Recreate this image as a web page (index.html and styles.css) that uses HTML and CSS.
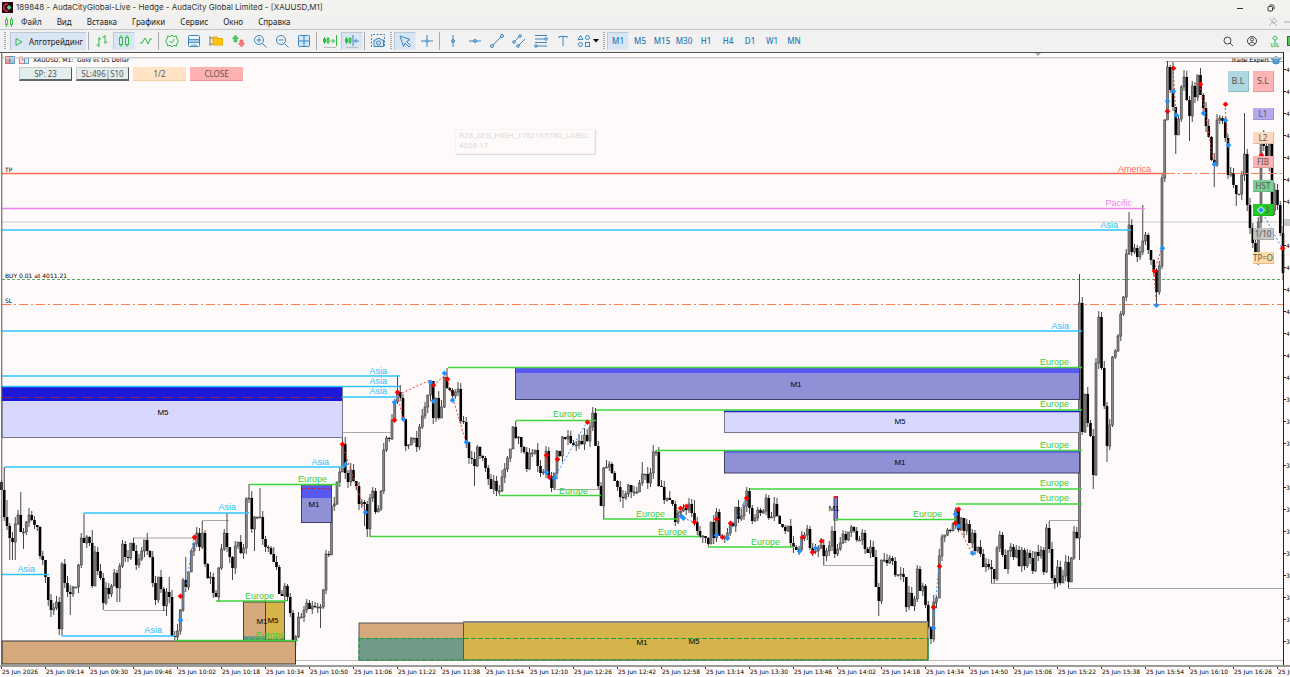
FILE: index.html
```html
<!DOCTYPE html>
<html lang="ru">
<head>
<meta charset="utf-8">
<title>XAUUSD,M1</title>
<link rel="stylesheet" href="styles.css">
</head>
<body>
<header class="titlebar">
  <svg class="app-logo" viewBox="0 0 11 11"><rect width="11" height="11" fill="#2a0712"/><path d="M6 2H4L2 4v3l2 2h2" fill="none" stroke="#e0284c" stroke-width="1.6"/><path d="M5 5.5h4M7 3.5v4" stroke="#4fe08a" stroke-width="2"/></svg>
  <h1 class="title">189848 - AudaCityGlobal-Live - Hedge - AudaCity Global Limited - [XAUUSD,M1]</h1>
  <div class="window-tools">
    <button class="win-btn" aria-label="Свернуть"><svg viewBox="0 0 10 10"><path d="M2 5.500h6" stroke="#333"/></svg></button>
    <button class="win-btn" aria-label="Восстановить"><svg viewBox="0 0 10 10" fill="none" stroke="#333"><rect x="2" y="3.500" width="4.500" height="4.500" rx="1"/><path d="M3.500 2h3q1.500 0 1.500 1.500v3"/></svg></button>
  </div>
</header>
<nav class="menubar">
  <svg class="menu-logo" viewBox="0 0 10 12" fill="none" stroke="#3fc24c"><rect x="1.500" y="3.500" width="2" height="5"/><rect x="6.500" y="3.500" width="2" height="5"/><path d="M2.500 1v2M2.500 9v2M7.500 1v2M7.500 9v2"/></svg>
  <button class="menu">Файл</button><button class="menu">Вид</button><button class="menu">Вставка</button><button class="menu">Графики</button><button class="menu">Сервис</button><button class="menu">Окно</button><button class="menu">Справка</button>
  <div class="menu-end">
    <svg viewBox="0 0 10 10" fill="none" stroke="#bbb"><path d="M1 9l3-3M3 4l3 3 1-2 2-1-3-3-1 2zM1 1l8 8"/></svg>
    <svg viewBox="0 0 6 10"><path d="M0 5h6" stroke="#aaa"/></svg>
  </div>
</nav>
<div class="toolbar">
  <span class="grip"></span>
  <button class="algo"><svg viewBox="0 0 10 10" fill="none" stroke="#2fb945"><path d="M2 1.500l6 3.500-6 3.500z"/></svg>Алготрейдинг</button>
  <span class="sep"></span>
  <button class="tool green" aria-label="Бары"><svg viewBox="0 0 14 14"><path d="M4 3v10M1.500 11H4M4 5h2M10 1v9M7.500 3H10M10 8h2.500"/></svg></button>
  <button class="tool green on" aria-label="Свечи"><svg viewBox="0 0 14 14"><rect x="2.500" y="3.500" width="3" height="7"/><rect x="8.500" y="3.500" width="3" height="7"/><path d="M4 1v2M4 11v2M10 1v2M10 11v2"/></svg></button>
  <button class="tool green" aria-label="Линия"><svg viewBox="0 0 14 14"><path d="M1 9l2 0 3-5 3 6 2-5 2 0"/></svg></button>
  <span class="sep"></span>
  <button class="tool green" aria-label="Индикаторы"><svg viewBox="0 0 14 14"><path d="M7 1l1.700 1.600 2.800-.6.4 2.700L13.500 7l-1.600 2.300-.4 2.700-2.800-.6L7 13l-1.700-1.600-2.800.6-.4-2.700L.5 7l1.600-2.300.4-2.700 2.800.6z"/><path d="M4.500 7l2 2 3-4"/></svg></button>
  <button class="tool" aria-label="Окна"><svg viewBox="0 0 14 14"><rect x="1.500" y="1.500" width="11" height="11" rx="1" fill="#eef5fb"/><rect x="2" y="5.500" width="10" height="3" fill="#a5cbe8" stroke="none"/><path d="M1.500 5.500h11M1.500 8.500h11M4 11h6" stroke-width=".8"/></svg></button>
  <button class="tool" aria-label="Папка"><svg viewBox="0 0 14 14"><path d="M1 2v10M1 4h3M1 10h3" stroke="#777"/><path d="M4 3h4l1 1.500h5V11H4z" fill="#ffc20e" stroke="#e5a800"/></svg></button>
  <button class="tool" aria-label="Обмен"><svg viewBox="0 0 14 14"><path d="M4.500 1l3 3.500H6V8H3V4.500H1.500z" fill="#58c968" stroke="#2fb945" stroke-width=".6"/><path d="M10.500 13l3-3.500H12V6H9v3.500H7.500z" fill="#f08080" stroke="#e05050" stroke-width=".6"/></svg></button>
  <button class="tool" aria-label="Увеличить"><svg viewBox="0 0 14 14"><circle cx="6" cy="6" r="4.500"/><path d="M9.500 9.500l4 4M3.500 6h5M6 3.500v5"/></svg></button>
  <button class="tool" aria-label="Уменьшить"><svg viewBox="0 0 14 14"><circle cx="6" cy="6" r="4.500"/><path d="M9.500 9.500l4 4M3.500 6h5"/></svg></button>
  <button class="tool" aria-label="Сетка"><svg viewBox="0 0 14 14"><rect x="1.500" y="1.500" width="11" height="11" rx="1" fill="#d4e8f8"/><path d="M7 1.500v11M1.500 7h11"/></svg></button>
  <span class="sep"></span>
  <button class="tool green" aria-label="Автопрокрутка"><svg viewBox="0 0 14 14"><path d="M1.500 3v7M5 3v7M.5 5h2v3h-2zM4 4.500h2v4H4zM7.500 7h4M9.500 5l2 2-2 2M13.500 1v11"/><path d="M1 13.500h12" stroke="#bbb"/></svg></button>
  <button class="tool on" aria-label="Сдвиг"><svg viewBox="0 0 14 14"><path stroke="#2fb945" d="M1.500 3v7M5 3v7M.5 5h2v3h-2zM4 4.500h2v4H4z"/><path d="M8 1v11M9.500 7H14M11.500 5l-2 2 2 2"/><path d="M1 13.500h12" stroke="#bbb"/></svg></button>
  <span class="sep"></span>
  <button class="tool" aria-label="Снимок"><svg viewBox="0 0 14 14"><path d="M.5 13V.5h13V13" stroke-dasharray="2 1.500"/><path d="M3 6h2l1-1.500h3L10 6h2.500v6.500H3z" fill="#d4e8f8"/><circle cx="7.500" cy="9" r="2"/></svg></button>
  <span class="grip"></span>
  <button class="tool on" aria-label="Курсор"><svg viewBox="0 0 14 14"><path d="M2 2l10 3.500-3.500 2 4 4-1.500 1.500-4-4-1.500 3.500z"/></svg></button>
  <button class="tool" aria-label="Перекрестие"><svg viewBox="0 0 14 14"><path d="M7 1v12M1 7h12"/><rect x="6" y="6" width="2" height="2" fill="#8fc0e6" stroke-width=".6"/></svg></button>
  <span class="sep"></span>
  <button class="tool" aria-label="Вертикаль"><svg viewBox="0 0 14 14"><path d="M7 1v12"/><circle cx="7" cy="7" r="1.500" fill="#8fc0e6"/></svg></button>
  <button class="tool" aria-label="Горизонталь"><svg viewBox="0 0 14 14"><path d="M1 7h12"/><circle cx="7" cy="7" r="1.500" fill="#8fc0e6"/></svg></button>
  <button class="tool" aria-label="Тренд"><svg viewBox="0 0 14 14"><path d="M2 12L12 2"/><circle cx="2" cy="12" r="1.500" fill="#d4e8f8"/><circle cx="12" cy="2" r="1.500" fill="#d4e8f8"/></svg></button>
  <button class="tool" aria-label="Канал"><svg viewBox="0 0 14 14"><path d="M2 8l6-6M6 12l7-7"/><circle cx="2" cy="8" r="1.300" fill="#d4e8f8"/><circle cx="8" cy="2" r="1.300" fill="#d4e8f8"/><circle cx="6" cy="12" r="1.300" fill="#d4e8f8"/></svg></button>
  <button class="tool" aria-label="Фибоначчи"><svg viewBox="0 0 14 14"><path d="M1 1.500h12M1 5h12M1 8.500h12M1 12h12"/><circle cx="12" cy="5" r="1.300" fill="#d4e8f8"/><circle cx="2" cy="12" r="1.300" fill="#d4e8f8"/></svg></button>
  <button class="tool" aria-label="Текст"><svg viewBox="0 0 14 14"><path d="M3 4V2.500h8V4M7 2.500V12"/></svg></button>
  <button class="tool wide" aria-label="Фигуры"><svg viewBox="0 0 14 14"><path d="M1 5.500L3.500 1.500 6 5.500z"/><circle cx="10.500" cy="3.500" r="2"/><circle cx="3.500" cy="10.500" r="2"/><rect x="8.500" y="8.500" width="4" height="4"/></svg><svg class="caret" viewBox="0 0 6 4"><path d="M0 0h6L3 3.500z"/></svg></button>
  <span class="grip"></span>
  <button class="tool tf on">M1</button><button class="tool tf">M5</button><button class="tool tf">M15</button><button class="tool tf">M30</button><button class="tool tf">H1</button><button class="tool tf">H4</button><button class="tool tf">D1</button><button class="tool tf">W1</button><button class="tool tf">MN</button>
  <div class="toolbar-end">
    <button class="tool dark" aria-label="Поиск"><svg viewBox="0 0 14 14"><circle cx="6.500" cy="6.500" r="3.500"/><path d="M9 9l3 3"/></svg></button>
    <button class="tool dark" aria-label="Профиль"><svg viewBox="0 0 14 14"><circle cx="7" cy="7" r="4.500"/><circle cx="7" cy="5.500" r="1.500"/><path d="M4 10q3-3.500 6 0"/></svg></button>
    <button class="tool lvl"><svg viewBox="0 0 8 8" fill="none" stroke="#2fb945"><path d="M4 .8l2.500 2.400L4 5.200 1.500 3.200zM4 5v3"/></svg>LVL</button>
    <span class="battery"></span>
  </div>
</div>
<main class="chart">
  <svg class="plot" id="plot" viewBox="0 52 1290 613" preserveAspectRatio="xMinYMin slice" role="img" aria-label="XAUUSD M1"></svg>
  <div class="trade-row">
    <button class="trade raised">SP: 23</button><button class="trade raised">SL:496|S10</button><button class="trade peach">1/2</button><button class="trade rose">CLOSE</button>
  </div>
  <div class="tip">RZ8_SES_HIGH_1782165780_LABEL<br>4028.17</div>
  <div class="side">
    <div class="side-top"><button class="big bl">B.L</button><button class="big sl">S.L</button></div>
    <button class="small c1">L1</button><button class="small c2">L2</button><button class="small c3">FIB</button><button class="small c4">HST</button>
    <button class="small c5"><svg viewBox="0 0 8 8"><path d="M4 0l4 4-4 4-4-4z" fill="#fff"/><path d="M4 1l3 3-3 3-3-3z" fill="#1e90ff"/></svg>3</button>
    <button class="small c6">1/10</button><button class="small c7">TP=O</button>
  </div>
  <div class="times" id="times"></div>
</main>
<script src="chart.js"></script>
</body>
</html>
```

FILE: styles.css
```css
* { box-sizing: border-box; }
body {
  margin: 0;
  min-height: 100vh;
  display: flex;
  flex-direction: column;
  background: #f0f0f0;
  color: #222;
  font: 8px/12px "Noto Sans", "Open Sans", sans-serif;
  overflow: hidden;
}
button { font: inherit; color: inherit; border: 0; padding: 0; background: none; }
.titlebar { height: 15px; display: flex; align-items: center; background: #f3f2ee; }
.app-logo { width: 11px; height: 11px; margin: 0 3px 0 2px; }
.title { margin: 0; font: 8px/15px Inter, Roboto, sans-serif; color: #333; white-space: nowrap; }
.window-tools { margin-left: auto; display: flex; gap: 21px; padding-right: 14px; }
.win-btn { width: 10px; height: 10px; display: flex; }
.menubar { height: 15px; display: flex; align-items: center; border-bottom: 1px solid #c4c6c4; }
.menu-logo { width: 10px; height: 12px; margin: 0 7px 0 4px; }
.menu { margin-right: 15px; white-space: nowrap; }
.menu-end { margin-left: auto; display: flex; gap: 6px; }
.menu-end svg { height: 10px; }
.toolbar { height: 22px; display: flex; align-items: center; padding-left: 3px; overflow: hidden; background: #f1f1f1; }
.grip { flex: 0 0 5px; height: 18px; background: repeating-linear-gradient(#aaa 0 1px, transparent 1px 2px) 1px 0 / 2px 100% no-repeat; }
.sep { flex: 0 0 4px; height: 18px; background: linear-gradient(#aaa, #aaa) 1px 0 / 1px 100% no-repeat; }
.algo { flex: 0 0 76px; margin: 0 1px 0 2px; height: 18px; display: flex; align-items: center; gap: 5px; padding-left: 3px; background: #d8e5f2; border-top: 1px solid #bcc8d4; border-left: 1px solid #bcc8d4; white-space: nowrap; }
.algo svg { width: 10px; height: 10px; }
.tool { flex: 0 0 22px; height: 18px; display: flex; align-items: center; justify-content: center; border: 1px solid transparent; }
.tool svg { width: 14px; height: 14px; flex: none; fill: none; stroke: #3a85c0; }
.tool.green svg { stroke: #2fb945; }
.tool.dark svg { stroke: #444; }
.tool.on { background: #d8e5f2; border-color: #bcc8d4 #e4ecf4 #e4ecf4 #bcc8d4; }
.tool.wide { flex-basis: 28px; gap: 2px; }
.tool svg.caret { width: 6px; height: 4px; fill: #000; stroke: none; }
.tf { color: #2a78b4; font-weight: 500; }
.toolbar-end { margin-left: auto; display: flex; align-items: center; gap: 2px; }
.tool.lvl { width: 20px; flex-basis: 20px; flex-direction: column; color: #2fb945; font: 700 5px/5px "Noto Sans", sans-serif; }
.tool.lvl svg { width: 8px; height: 8px; stroke: #2fb945; }
.battery { width: 3px; height: 10px; background: #4cc94c; border: 1px solid #555; border-right: 0; }

.chart { position: relative; flex: 1; display: flex; flex-direction: column; background: #fffafa; }
.plot { display: block; width: 100%; flex: 1; min-height: 0; }
.plot text { fill: #000; font-family: "DejaVu Sans", sans-serif; font-size: 6px; white-space: pre; }
.plot .session { font-family: "Liberation Sans", Arial, sans-serif; font-size: 9px; text-anchor: end; }
.plot .zone { font-family: "Liberation Sans", Arial, sans-serif; font-size: 8px; text-anchor: middle; }
.plot .asia { fill: #28c0fa; }
.plot .europe { fill: #3cce3c; }
.plot .america { fill: #ff6b52; }
.plot .pacific { fill: #ee82ee; }

.trade-row { position: absolute; left: 19px; top: 15px; display: flex; gap: 4px; }
.trade { width: 53px; height: 14px; color: #555; }
.raised { background: #e2eeee; border: 1px solid #c8cccc; border-right: 1px solid #555; border-bottom: 2px solid #666; line-height: 10px; }
.peach { background: #ffe3c4; border-bottom: 1px solid #f4cfa0; }
.rose { background: #ffb1b1; border-bottom: 1px solid #f09090; }
.tip { position: absolute; left: 455px; top: 77px; padding: 1px 5px 2px 3px; color: #ded8d8; font-family: Roboto, sans-serif; line-height: 10px; border: 1px solid #f8f3f3; box-shadow: 1px 1px 1px #ddd; }
.side { position: absolute; right: 16px; top: 19px; display: flex; flex-direction: column; align-items: flex-end; gap: 12px; color: #555; }
.side-top { display: flex; gap: 4px; margin-bottom: 4px; }
.big { width: 21px; height: 21px; font-size: 9px; border-right: 1px solid #0002; border-bottom: 1px solid #0002; }
.small { width: 21px; height: 12px; line-height: 11px; border-right: 1px solid #0002; border-bottom: 1px solid #0002; white-space: nowrap; display: flex; align-items: center; justify-content: center; }
.small svg { width: 8px; height: 8px; }
.bl { background: #add8e1; }
.sl { background: #ffb3b3; }
.c1 { background: #b5aaeb; }
.c2 { background: #ffd9be; }
.c3 { background: #ffb0b0; }
.c4 { background: #78d094; }
.c5 { background: #22cc22; }
.c6 { background: #bdbdbde0; }
.c7 { background: #ffdca4; }

.times { height: 13px; display: flex; padding-left: 1px; overflow: hidden; border-top: 2px solid #999c99; background: #fffafa; }
.time { flex: 0 0 44px; border-left: 1px solid #333; height: 2px; font: 6px/9px "DejaVu Sans", sans-serif; white-space: nowrap; color: #000; }
```

FILE: chart.js
```js
const plot = document.getElementById('plot');
const out = [];
const BLUE = '#30c4ff', GREEN = '#3ed43e', GRAY = '#a8a8a8';

function line(x1, y1, x2, y2, color, width = 1, dash = '') {
  out.push(`<path d="M${x1} ${y1}L${x2} ${y2}" stroke="${color}" stroke-width="${width}" stroke-dasharray="${dash}" fill="none"/>`);
}
function rect(x1, y1, x2, y2, fill, stroke = 'none', width = 1) {
  out.push(`<rect x="${x1}" y="${y1}" width="${x2 - x1}" height="${y2 - y1}" fill="${fill}" stroke="${stroke}" stroke-width="${width}"/>`);
}
function text(x, y, s, cls = '') {
  out.push(`<text x="${x}" y="${y}" class="${cls}">${s}</text>`);
}

/* One token per minute bar: close, optionally followed by high and low. */
const START = 482;
const BARS = `490 517,467 526,500 538,,560 542,,560 524,,560 515 532,492 532,,549 522 515,508 520,511 525 527 556 560
577 600 610,,617 608 602,,610 629 564,562,636 583 592 594,,615 587 587 565 538 543,513 537 543
586,530 552 571 578 603,,610 588 594 586 573 588,,602 566,,602 544 557 558 543 551,538 565 559
551 540 551 557 583 600 577 589 606 592,,616 597,577 636 637,,640 631 610 580 587,557 572 551 544
533 547 533,521 564 578 577 593 597 568 549 533 547,513 557 568,,580 546 542 553 548 499 498,484
529 517,,551 517 517,488 539 547 548 554 562 567 594 596 586 597 613 640 637 617 617 610
603 609 606 607 607 607,,628 590 554 555 506 504 482 472 444,436 473 482 470 481 486 504
502 504,,526 529,,537 498,,537 491 512 509 491 450 438 439 420 402 392,375 398 419 446 445 438
438 447 427 416 407 395 381 418 398 418 407 377 388,368 390 396 392 389 421 422 442 458
459 466,,486 447 456 458 468 479 489 481 491 491,,495 477 469 458 449 427 438,421 437 447 452
469 453 453 450 466 473 472 451 476 488 473 451 456 437 439 436 443 445 445 441
444 435 441 427 413 446 486 506 468,,519 467 464 473 481 487 497 498,,508 494 485 492 492
492 483 474,462 474 483 473 452 452,450 486 487 500 498 500 504 522 513 511 508 510 504
513 522,500 531 537 536 538 544 522 538 512 536 538 537 533 523 526 507 519 516 506
491 508 521 518 510 513 511 498 518 517 504 516 524 527 531 526 543 547 550 549
538 535 529 548 552 551 548 545 556,,565 551 546 531 554,520 549 543 534 540 532 527 531
540 540 533 549 553 547 557 587 601,,616 560 560 563 558 561 575 575 574 577 607 593
606 599 569 591 586 605 627 639 602 598 556 537 535 530 531 524 510 530 518 531
524 543 533 551 547 554 567 564 567 569,,583 579 548 535 555 569 551 547 557 550 566
550 566 553 558 571 552 556 550 572 528 549,521 578 583 567 583 576 562 582,,588 558 532
538 303,274,560 432 394 423 436 475,,489 363 317 368 406 446,,462 425 357 351 336 314 297 254 225,212
252 248 257 252 241,205 235 250 260 270 292,,303 266 178 120 67,61 90 107,62 135,,154 119 87 77
100 116,,141 86 97 75 95 108 126 137 160 165,,187 120 118 121 138 175 173 185 194,,206 194
175 154,113 205 228 243 252 222,,265 144 146,130 165 144 210 190 205 233 273`;

function drawBars() {
  let open = START;
  BARS.trim().split(/\s+/).forEach((token, i) => {
    const [c, h, l] = token.split(',');
    const close = +c;
    const x = 1.5 + 2.75 * i;
    const top = Math.min(open, close), bottom = Math.max(open, close);
    const high = h ? +h : top - (i * 7 + top) % 8;
    const low = l ? +l : bottom + (i * 5 + bottom) % 7;
    line(x, high, x, low, '#333', 0.9);
    if (close <= open) rect(x - 1, top, x + 1, Math.max(bottom, top + 1), '#888', '#3a3a3a', 0.6);
    else rect(x - 1.3, top, x + 1.3, Math.max(bottom, top + 1), '#000');
    open = close;
  });
}

function session(x1, x2, y, name, tx, ty) {
  line(x1, y, x2, y, name === 'Asia' ? BLUE : GREEN, 1.6);
  text(tx + 1, ty, name, 'session ' + name.toLowerCase());
}

rect(0, 52, 1290, 665, '#fffafa');
line(2, 222, 1283, 222, '#dcdcdc', 1.4);
line(2, 279.5, 1283, 279.5, '#5aa860', 1, '3 2');
line(2, 304.5, 1283, 304.5, '#ff7f50', 1, '9 3 2 3');
line(2, 660.5, 1283, 660.5, '#bbb');
[[104, 610.5, 166], [133, 538, 196], [202, 520.5, 229], [343, 432.5, 393], [554, 489.5, 600], [823, 565.5, 874],
 [991, 583.5, 1056], [1049, 520.5, 1081], [1068, 588.5, 1283], [1166, 61.5, 1283]].forEach(([a, y, b]) => line(a, y, b, y, GRAY));

drawBars();

/* Supply and demand zones */
rect(2, 386.5, 342.5, 437.5, '#d8d8ff', '#77778c');
rect(2, 387, 342, 401, '#1c18d8');
line(2, 397.5, 342, 397.5, '#902060', 1, '11 5');
rect(301.5, 485, 331.5, 522.5, '#9090d6', '#404060');
rect(302, 486, 331, 498, '#5858f0');
line(302, 488.5, 331, 488.5, '#d02030', 1.2, '3 2');
rect(515.5, 368, 1079.5, 399.5, '#9090d6', '#404060');
rect(516, 368, 1079, 373, '#5858f0');
rect(724.5, 411, 1079.5, 432.5, '#d8d8ff', '#77778c');
line(724, 411.500, 1080, 411.500, '#2222cc', 1.5);
rect(724.5, 451, 1079.5, 473, '#9090d6', '#404060');
line(725, 452, 1079, 452, '#5858f0', 1.5);
rect(834, 497, 837.5, 520, '#8080d0', '#404060');
rect(834, 496, 838, 498, '#d02030');
rect(2, 641, 295.5, 664, '#d6a97d', '#333');
rect(243.5, 602, 284.5, 640, '#d6b44c', '#444');
rect(243.5, 602, 265.500, 640, '#d6a97d', '#444');
rect(244, 636, 265, 640, '#729a88');
line(244, 639, 284, 639, '#18a040', 1, '4 2');
rect(359, 623, 463.5, 660, '#d6a97d', '#555');
rect(359.5, 638, 463, 660, '#729a88');
rect(463.5, 622, 928, 660, '#d6b44c', '#555');
line(463, 622, 928, 622, '#888', 2);
line(359, 638.5, 928, 638.5, '#18a040', 1.2, '5 2');
line(359, 660, 928, 660, '#18a040', 1.2, '5 2');
line(359, 638, 359, 660, '#18a040', 1.2, '4 2');
line(928, 638, 928, 660, '#18a040', 1.4);

/* Session highs and lows */
line(2, 173.5, 1166, 173.5, '#ff6b52', 1.6);
line(1166, 173.5, 1283, 173.5, '#ff7f50', 1, '9 3 2 3');
text(1151, 172, 'America', 'session america');
line(2, 208.5, 1145, 208.5, '#ee82ee', 1.4);
text(1132, 206, 'Pacific', 'session pacific');
[[2, 1131, 230, 1117, 228], [2, 1082, 331, 1068, 329], [2, 400, 376, 386, 374], [2, 400, 386.5, 386, 384],
 [342, 400, 397, 386, 394], [5, 345, 467, 328, 465], [84, 249, 513, 235, 510], [2, 49, 574.5, 34, 572],
 [62, 175, 636, 161, 633]].forEach(([a, b, y, tx, ty]) => session(a, b, y, 'Asia', tx, ty));
[[448, 1082, 367.5, 1068, 365], [596, 1082, 410, 1068, 407], [656, 1082, 450.5, 1068, 448], [750, 1082, 489, 1068, 486],
 [956, 1082, 504, 1068, 501], [835, 956, 519.5, 941, 517], [516, 596, 420.5, 581, 417], [499, 601, 495.5, 587, 494],
 [603, 678, 519, 664, 517], [370, 700, 536.5, 686, 535], [708, 794, 547, 779, 545], [249, 340, 484.5, 326, 482],
 [216, 287, 601, 273, 599], [175, 298, 640.5, 284, 638]].forEach(([a, b, y, tx, ty]) => session(a, b, y, 'Europe', tx, ty));
[[163, 415, 'M5'], [314, 507, 'M1'], [796, 387, 'M1'], [900, 424, 'M5'], [900, 465, 'M1'], [834, 511, 'M1'],
 [262, 624, 'M1'], [273, 623, 'M5'], [642, 645, 'M1'], [694, 644, 'M5']].forEach(([x, y, s]) => text(x, y, s, 'zone'));

/* Deals */
[[342, 444, 365, 512], [397, 392, 403, 419], [402, 393, 430, 380], [433, 385, 447, 374], [447, 379, 466, 442],
 [1154, 271, 1162, 248], [1154, 271, 1156, 300], [1173, 68, 1176, 115], [1200, 84, 1214, 164], [1225, 104, 1228, 145],
 [958, 526, 972, 553], [546, 455, 549, 477]].forEach(p => line(...p, '#ff3030', 1, '2 2'));
[[180, 620, 194, 537], [554, 478, 587, 422], [683, 518, 694, 522], [727, 538, 746, 498], [799, 551, 802, 537],
 [933, 628, 939, 566], [1261, 210, 1282, 248]].forEach(p => line(...p, '#3090ff', 1, '2 2'));
function deals(list, color) {
  list.forEach(([x, y]) => out.push(`<path d="M${x + 0.5} ${y - 2.5}l2.800 2.800-2.800 2.800-2.800-2.800z" fill="${color}"/>`));
}
deals([[194, 537], [180, 596], [342, 444], [397, 392], [394, 420], [433, 385], [447, 379], [546, 455], [549, 477], [557, 459],
 [587, 422], [680, 508], [686, 506], [694, 522], [716, 519], [722, 537], [730, 523], [746, 498], [802, 537], [812, 552],
 [821, 541], [933, 607], [939, 566], [955, 523], [958, 509], [1154, 271], [1167, 111], [1173, 68], [1200, 84], [1225, 104],
 [1261, 155], [1282, 248]], '#f00');
deals([[180, 620], [345, 464], [365, 512], [394, 402], [403, 419], [430, 382], [433, 401], [444, 373], [452, 400], [466, 442],
 [546, 472], [554, 478], [681, 516], [683, 518], [716, 535], [727, 538], [799, 551], [815, 548], [933, 628], [955, 514],
 [958, 526], [972, 553], [1156, 305], [1167, 101], [1173, 91], [1176, 115], [1203, 113], [1214, 164], [1225, 120],
 [1228, 145], [1162, 248]], '#1e90ff');

text(5, 172, 'TP');
text(5, 278, 'BUY 0.01 at 4011.21');
text(5, 303, 'SL');
text(33, 62, 'XAUUSD, M1:  Gold vs US Dollar');
text(1231, 62, 'Trade Expert');
out.push('<g stroke-width=".8"><rect x="5.500" y="56.500" width="4.500" height="7" fill="#fbb" stroke="#e05050"/><rect x="10" y="56.500" width="4.500" height="7" fill="#d4e8f8" stroke="#3a85c0"/><path d="M5.500 60h9M5.500 62h9" stroke="#888"/><path d="M19.500 57h3v3h2v3.500h-5z" fill="#fdd" stroke="#e05050"/><path d="M24.500 57l2 2 2-2v6.500h-4z" fill="#d4e8f8" stroke="#3a85c0"/><path d="M1271 59l5-2.500 5 2.500-5 2.500zM1273 60.500v2.500q3 2 6 0v-2.500" fill="#5aa8d8" stroke="#2878a8"/></g>');

/* Frame and price scale */
line(0, 52.5, 1284, 52.5, '#555');
line(2, 57.8, 1283, 57.8, '#c8cbc8', 1.6);
out.push('<path d="M1035 53h6l-3 3z" fill="#aaa"/>');
line(1.8, 52, 1.8, 665, '#555');
line(1283.5, 52, 1283.5, 665, '#222');
for (let k = 0; k < 27; k++) {
  const y = 69.5 + 22 * k;
  line(1283, y, 1286, y, '#222');
  text(1286, y + 2, k < 15 ? '4' : '3');
}
rect(1284, 219, 1290, 226, '#c8c8c8');
plot.innerHTML = out.join('');

/* Time scale: one label per 16 bars */
const times = document.getElementById('times');
for (let k = 0; k < 30; k++) {
  const m = 9 * 60 - 2 + 16 * k;
  const label = document.createElement('span');
  label.className = 'time';
  label.textContent = k === 0 ? '25 Jun 2026' : `25 Jun ${String(Math.floor(m / 60)).padStart(2, '0')}:${String(m % 60).padStart(2, '0')}`;
  times.append(label);
}
```
